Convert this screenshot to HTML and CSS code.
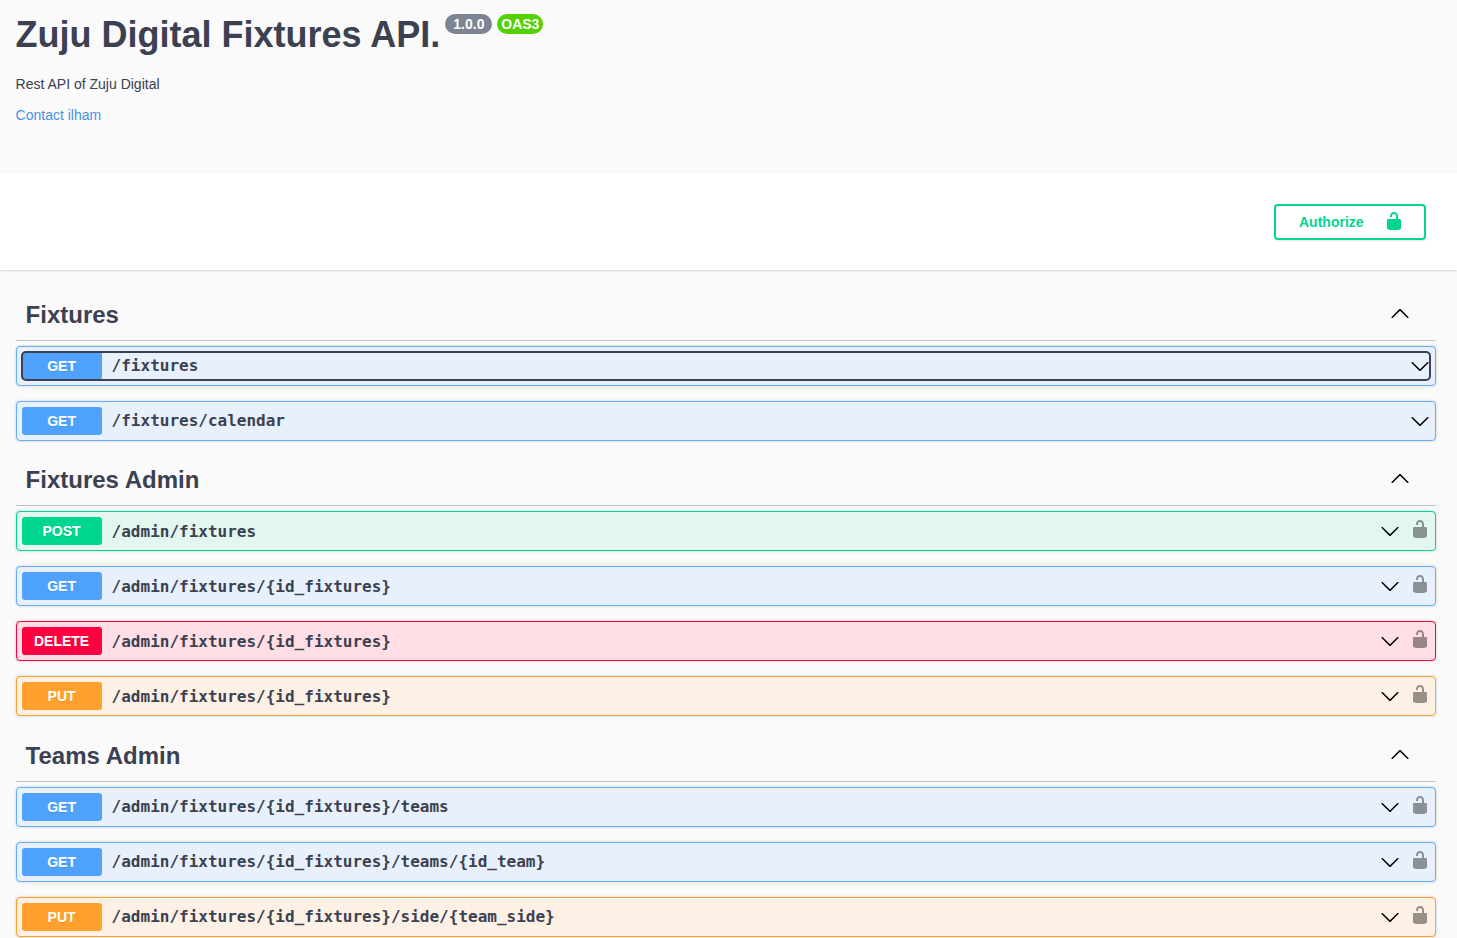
FILE: index.html
```html
<!DOCTYPE html>
<html lang="en">
<head>
    <meta charset="UTF-8">
    <meta name="viewport" content="width=device-width, initial-scale=1.0">
    <title>Zuju Digital Fixtures API</title>
    <link rel="stylesheet" href="styles.css">
</head>
<body>
    <svg class="icon-defs" aria-hidden="true">
        <symbol id="arrow-down" viewBox="0 0 20 20"><path d="M17.418 6.109c.272-.268.709-.268.979 0s.271.701 0 .969l-7.908 7.83c-.27.268-.707.268-.979 0l-7.908-7.83c-.27-.268-.27-.701 0-.969.271-.268.709-.268.979 0L10 13.25l7.418-7.141z"/></symbol>
        <symbol id="arrow-up" viewBox="0 0 20 20"><path d="M17.418 14.908c.272.268.709.268.979 0s.271-.701 0-.969l-7.908-7.83c-.27-.268-.707-.268-.979 0l-7.908 7.83c-.27.268-.27.701 0 .969.271.268.709.268.979 0L10 7.77l7.418 7.138z"/></symbol>
        <symbol id="unlocked" viewBox="0 0 20 20"><path d="M15.8 8H14V5.6C14 2.703 12.665 1 10 1 7.334 1 6 2.703 6 5.6V6h2v-.801C8 3.754 8.797 3 10 3c1.203 0 2 .754 2 2.199V8H4c-.553 0-1 .646-1 1.199V17c0 .549.428 1.139.951 1.307l1.197.387C5.672 18.861 6.55 19 7.1 19h5.8c.549 0 1.428-.139 1.951-.307l1.196-.387c.524-.167.953-.757.953-1.306V9.199C17 8.646 16.352 8 15.8 8z"/></symbol>
    </svg>

    <!-- Info -->
    <div class="info">
        <div class="title-row">
            <h1>Zuju Digital Fixtures API.</h1>
            <span class="badge badge-version">1.0.0</span>
            <span class="badge badge-oas">OAS3</span>
        </div>
        <p class="description">Rest API of Zuju Digital</p>
        <p class="contact"><a href="#">Contact ilham</a></p>
    </div>

    <!-- Authorize bar -->
    <div class="scheme-bar">
        <button class="authorize">
            <span>Authorize</span>
            <svg width="20" height="20"><use href="#unlocked"/></svg>
        </button>
    </div>

    <div class="tags">
        <!-- Fixtures -->
        <h2 class="tag">
            <span>Fixtures</span>
            <svg width="20" height="20"><use href="#arrow-up"/></svg>
        </h2>
        <div class="op op-get">
            <div class="summary focused">
                <span class="method">GET</span>
                <span class="path">/fixtures</span>
                <svg class="arrow" width="20" height="20"><use href="#arrow-down"/></svg>
            </div>
        </div>
        <div class="op op-get">
            <div class="summary">
                <span class="method">GET</span>
                <span class="path">/fixtures/calendar</span>
                <svg class="arrow" width="20" height="20"><use href="#arrow-down"/></svg>
            </div>
        </div>

        <!-- Fixtures Admin -->
        <h2 class="tag">
            <span>Fixtures Admin</span>
            <svg width="20" height="20"><use href="#arrow-up"/></svg>
        </h2>
        <div class="op op-post">
            <div class="summary">
                <span class="method">POST</span>
                <span class="path">/admin/fixtures</span>
                <svg class="arrow" width="20" height="20"><use href="#arrow-down"/></svg>
                <svg class="lock" width="20" height="20"><use href="#unlocked"/></svg>
            </div>
        </div>
        <div class="op op-get">
            <div class="summary">
                <span class="method">GET</span>
                <span class="path">/admin/fixtures/{id_fixtures}</span>
                <svg class="arrow" width="20" height="20"><use href="#arrow-down"/></svg>
                <svg class="lock" width="20" height="20"><use href="#unlocked"/></svg>
            </div>
        </div>
        <div class="op op-delete">
            <div class="summary">
                <span class="method">DELETE</span>
                <span class="path">/admin/fixtures/{id_fixtures}</span>
                <svg class="arrow" width="20" height="20"><use href="#arrow-down"/></svg>
                <svg class="lock" width="20" height="20"><use href="#unlocked"/></svg>
            </div>
        </div>
        <div class="op op-put">
            <div class="summary">
                <span class="method">PUT</span>
                <span class="path">/admin/fixtures/{id_fixtures}</span>
                <svg class="arrow" width="20" height="20"><use href="#arrow-down"/></svg>
                <svg class="lock" width="20" height="20"><use href="#unlocked"/></svg>
            </div>
        </div>

        <!-- Teams Admin -->
        <h2 class="tag">
            <span>Teams Admin</span>
            <svg width="20" height="20"><use href="#arrow-up"/></svg>
        </h2>
        <div class="op op-get">
            <div class="summary">
                <span class="method">GET</span>
                <span class="path">/admin/fixtures/{id_fixtures}/teams</span>
                <svg class="arrow" width="20" height="20"><use href="#arrow-down"/></svg>
                <svg class="lock" width="20" height="20"><use href="#unlocked"/></svg>
            </div>
        </div>
        <div class="op op-get">
            <div class="summary">
                <span class="method">GET</span>
                <span class="path">/admin/fixtures/{id_fixtures}/teams/{id_team}</span>
                <svg class="arrow" width="20" height="20"><use href="#arrow-down"/></svg>
                <svg class="lock" width="20" height="20"><use href="#unlocked"/></svg>
            </div>
        </div>
        <div class="op op-put last">
            <div class="summary">
                <span class="method">PUT</span>
                <span class="path">/admin/fixtures/{id_fixtures}/side/{team_side}</span>
                <svg class="arrow" width="20" height="20"><use href="#arrow-down"/></svg>
                <svg class="lock" width="20" height="20"><use href="#unlocked"/></svg>
            </div>
        </div>
    </div>
</body>
</html>
```
FILE: styles.css
```css
/* Base styles */
body {
    margin: 0;
    height: 938px;
    overflow: hidden;
    background-color: #fafafa;
    color: #3b4151;
    font-family: "Liberation Sans", Arial, sans-serif;
}
.icon-defs {
    display: none;
}

/* Info */
.info {
    height: 174px;
    box-sizing: border-box;
    padding: 14px 21px 0 15.6px;
}
.title-row {
    display: flex;
    align-items: flex-start;
}
h1 {
    margin: 0 5px 0 0;
    font-size: 36px;
    line-height: 41px;
    font-weight: 700;
}
.badge {
    height: 20px;
    line-height: 20px;
    border-radius: 57px;
    color: #fff;
    font-size: 14px;
    font-weight: 700;
}
.badge-version {
    padding: 0 8px;
    margin-right: 5px;
    background-color: #7d8492;
}
.badge-oas {
    padding: 0 3.8px;
    background-color: #55d000;
}
.description, .contact {
    margin: 0;
    font-size: 14px;
    line-height: 16px;
}
.description {
    margin-top: 21px;
}
.contact {
    margin-top: 15px;
}
.contact a {
    color: #4990e2;
    text-decoration: none;
}

/* Authorize bar */
.scheme-bar {
    display: flex;
    justify-content: flex-end;
    padding: 30px 31px 30px 0;
    background-color: #fff;
    box-shadow: 0 1px 2px rgba(0, 0, 0, 0.15);
}
.authorize {
    display: flex;
    align-items: center;
    justify-content: space-between;
    box-sizing: border-box;
    width: 152px;
    height: 36px;
    padding: 0 20px 0 23px;
    background: transparent;
    border: 2px solid #00d68f;
    border-radius: 4px;
    box-shadow: 0 1px 2px rgba(0, 0, 0, 0.1);
    color: #00d68f;
    font-family: "Liberation Sans", Arial, sans-serif;
    font-size: 14px;
    font-weight: 700;
}
.authorize svg {
    margin-bottom: 2px;
    fill: #00d68f;
}

/* Tag sections */
.tags {
    padding: 20.4px 21px 0 15.6px;
}
.tag {
    display: flex;
    align-items: center;
    justify-content: space-between;
    box-sizing: border-box;
    height: 50.4px;
    margin: 0 0 5px;
    padding: 0 26px 0 10px;
    border-bottom: 1px solid rgba(59, 65, 81, 0.3);
    font-size: 24px;
    font-weight: 700;
}
.tag svg {
    margin-bottom: 4px;
}

/* Operations */
.op {
    box-sizing: border-box;
    height: 40px;
    margin-bottom: 15px;
    border: 1px solid;
    border-radius: 4px;
    box-shadow: 0 0 3px rgba(0, 0, 0, 0.19);
    padding: 5px;
}
.op.last {
    margin-bottom: 0;
}
.summary {
    display: flex;
    align-items: center;
    height: 28px;
}
.summary.focused {
    outline: 2px solid #3b4151;
    outline-offset: -1px;
    border-radius: 4px;
}
.method {
    flex: none;
    width: 80px;
    height: 28px;
    line-height: 28px;
    border-radius: 3px;
    color: #fff;
    font-size: 14px;
    font-weight: 700;
    text-align: center;
    text-shadow: 0 1px 0 rgba(0, 0, 0, 0.1);
}
.path {
    flex: 1;
    padding-left: 10px;
    font-family: "DejaVu Sans Mono", monospace;
    font-size: 16px;
    font-weight: 700;
}
.arrow {
    flex: none;
}
.lock {
    flex: none;
    margin-left: 10px;
    margin-bottom: 4px;
    opacity: 0.4;
}

.op-get { background-color: #e8f1fb; border-color: #61affe; }
.op-get .method { background-color: #4fa3ff; }
.op-post { background-color: #e2f7ef; border-color: #00d68f; }
.op-post .method { background-color: #00d68f; }
.op-delete { background-color: #ffdfe5; border-color: #ff0040; }
.op-delete .method { background-color: #ff0040; }
.op-put { background-color: #fdf0e4; border-color: #ff9f2d; }
.op-put .method { background-color: #ff9f2d; }
```
